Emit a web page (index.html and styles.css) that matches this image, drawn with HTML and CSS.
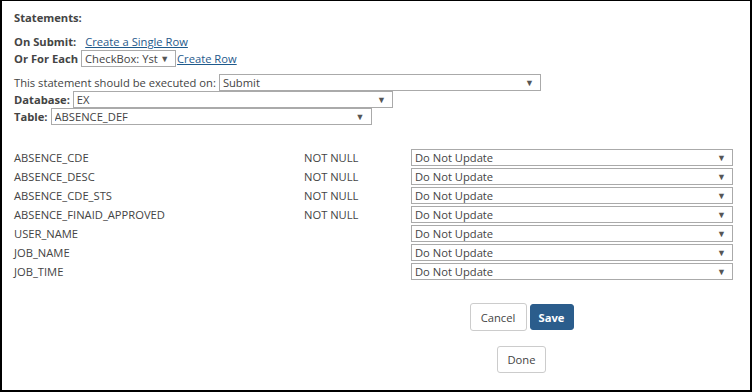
FILE: index.html
```html
<!DOCTYPE html>
<html lang="en">
<head>
  <meta charset="UTF-8" />
  <title>Statements</title>
  <link rel="stylesheet" href="styles.css">
</head>
<body>

  <div class="panel">
    <h3 class="title">Statements:</h3>

    <div class="line">
      <b>On Submit:</b>
      <a href="#" class="gap-link">Create a Single Row</a>
    </div>
    <div class="line">
      <b>Or For Each</b>
      <span class="pick pick-each"><select><option>CheckBox: Yst</option></select></span>
      <a href="#">Create Row</a>
    </div>

    <div class="settings">
      <div class="line">
        This statement should be executed on:
        <span class="pick pick-when"><select><option>Submit</option></select></span>
      </div>
      <div class="line">
        <b>Database:</b>
        <span class="pick pick-db"><select><option>EX</option></select></span>
      </div>
      <div class="line">
        <b>Table:</b>
        <span class="pick pick-table"><select><option>ABSENCE_DEF</option></select></span>
      </div>
    </div>

    <div class="fields">
      <span>ABSENCE_CDE</span><span>NOT NULL</span>
      <span class="pick pick-field"><select><option>Do Not Update</option></select></span>

      <span>ABSENCE_DESC</span><span>NOT NULL</span>
      <span class="pick pick-field"><select><option>Do Not Update</option></select></span>

      <span>ABSENCE_CDE_STS</span><span>NOT NULL</span>
      <span class="pick pick-field"><select><option>Do Not Update</option></select></span>

      <span>ABSENCE_FINAID_APPROVED</span><span>NOT NULL</span>
      <span class="pick pick-field"><select><option>Do Not Update</option></select></span>

      <span>USER_NAME</span><span></span>
      <span class="pick pick-field"><select><option>Do Not Update</option></select></span>

      <span>JOB_NAME</span><span></span>
      <span class="pick pick-field"><select><option>Do Not Update</option></select></span>

      <span>JOB_TIME</span><span></span>
      <span class="pick pick-field"><select><option>Do Not Update</option></select></span>
    </div>

    <div class="actions">
      <div class="btn-row">
        <button class="btn btn-cancel">Cancel</button>
        <button class="btn btn-primary">Save</button>
      </div>
      <button class="btn btn-done">Done</button>
    </div>
  </div>

</body>
</html>
```

FILE: styles.css
```css
* {
  box-sizing: border-box;
  margin: 0;
}

body {
  font-family: 'Open Sans', 'Liberation Sans', sans-serif;
  font-size: 11.2px;
  color: #444;
  background: #fff;
}

.panel {
  height: 392px;
  border: 2px solid #000;
  border-top-width: 1px;
  padding: 9px 12px 0 12px;
}

.title {
  font-size: 11.2px;
  font-weight: bold;
  line-height: 16px;
  margin-bottom: 8px;
}

.line {
  display: flex;
  align-items: center;
  min-height: 16px;
  line-height: 16px;
  white-space: nowrap;
}

.line b {
  margin-right: 3px;
}

a {
  color: #1f5a8c;
}

.gap-link {
  margin-left: 6px;
}

.settings {
  margin-top: 7px;
}

.pick {
  position: relative;
  display: block;
}

.pick select {
  display: block;
  appearance: none;
  -webkit-appearance: none;
  width: 100%;
  height: 17px;
  border: 1px solid #aaa;
  border-radius: 0;
  background: #fff;
  font-family: inherit;
  font-size: 11.2px;
  color: #444;
  padding: 0 0 0 3px;
  outline: none;
}

.pick::after {
  content: "\25BC";
  position: absolute;
  right: 7px;
  top: 4px;
  font-size: 9px;
  line-height: 9px;
  color: #555;
  pointer-events: none;
}

.pick-each {
  width: 95px;
  margin-right: 1px;
}

.pick-when {
  width: 322px;
  margin-left: 3px;
}

.pick-db {
  width: 320px;
}

.pick-table {
  width: 321px;
}

.fields {
  display: grid;
  grid-template-columns: 290px 107px 322px;
  grid-auto-rows: 19px;
  align-items: center;
  margin-top: 23px;
}

.actions {
  margin: 22px 0 0 291px;
  display: flex;
  flex-direction: column;
  align-items: center;
  gap: 15px;
}

.btn-row {
  display: flex;
  align-items: center;
  gap: 3px;
}

.btn {
  font-family: inherit;
  font-size: 11.2px;
  color: #444;
  background: #fff;
  border: 1px solid #ccc;
  border-radius: 3px;
  height: 28px;
  padding: 0;
}

.btn-cancel {
  width: 57px;
}

.btn-primary {
  width: 44px;
  height: 26px;
  background: #2b5d8c;
  border-color: #2b5d8c;
  color: #fff;
  font-weight: bold;
}

.btn-done {
  width: 49px;
  height: 27px;
}
```
